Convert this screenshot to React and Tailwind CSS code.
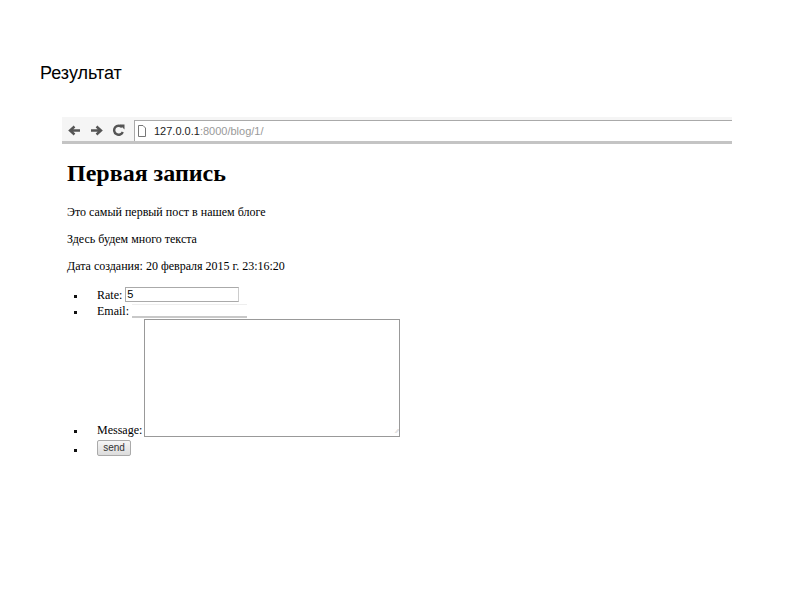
import React from 'react';

const Bullet = () => (
  <span className="w-[24px] flex justify-start pl-[1px] pb-[4px] shrink-0">
    <span className="block w-[3px] h-[3px] bg-[#111]" />
  </span>
);

export default function App() {
  return (
    <div className="w-[794px] h-[595px] bg-white overflow-hidden font-['Liberation_Serif',serif] text-black">
      <div className="pt-[63px] pl-[40px] text-[18px] leading-[21px] font-['Liberation_Sans',Arial,sans-serif]">
        Результат
      </div>

      {/* browser chrome */}
      <div className="mt-[33px] ml-[62px] w-[670px] h-[27px] bg-[#f5f5f5] border-b-[3px] border-[#c4c4c4] flex items-start">
        <div className="flex items-center gap-[9px] pl-[6px] pt-[7px] text-[#555]">
          <svg width="13" height="11" viewBox="0 0 13 11">
            <path d="M12 5.5H3M6.5 1.5L2 5.5l4.5 4" stroke="#555" strokeWidth="2.4" fill="none" />
          </svg>
          <svg width="13" height="11" viewBox="0 0 13 11">
            <path d="M1 5.5h9M6.5 1.5l4.5 4-4.5 4" stroke="#555" strokeWidth="2.4" fill="none" />
          </svg>
          <svg width="13" height="12" viewBox="0 0 13 12">
            <path d="M10 3.2A4.5 4.5 0 1 0 10.8 8" stroke="#555" strokeWidth="2.4" fill="none" />
            <path d="M7.5 0.5h5v5z" fill="#555" />
          </svg>
        </div>
        <div className="ml-[9px] mt-[3px] flex-1 h-[21px] bg-white border-t border-l border-[#aaa] flex items-center pl-[3px]">
          <svg width="8" height="12" viewBox="0 0 8 12" className="mr-[8px]">
            <path d="M0.5 0.5h4.5l2.5 2.5v8.5h-7z" stroke="#777" fill="none" />
          </svg>
          <span className="text-[11px] font-['Liberation_Sans',Arial,sans-serif] text-[#222]">127.0.0.1</span>
          <span className="text-[11px] font-['Liberation_Sans',Arial,sans-serif] text-[#999]">:8000/blog/1/</span>
        </div>
      </div>

      {/* page */}
      <div className="ml-[67px] mt-[15px]">
        <h1 className="text-[24px] leading-[28px] font-bold">Первая запись</h1>
        <p className="mt-[18px] text-[12px] leading-[15px]">Это самый первый пост в нашем блоге</p>
        <p className="mt-[12px] text-[12px] leading-[15px]">Здесь будем много текста</p>
        <p className="mt-[12px] text-[12px] leading-[15px]">Дата создания: 20 февраля 2015 г. 23:16:20</p>

        <ul className="mt-[13px] ml-[6px] text-[12px] leading-[13px]">
          <li className="flex items-end h-[15px]">
            <Bullet />
            <span className="mr-[3px]">Rate:</span>
            <span className="w-[114px] h-[15px] border border-[#aaa] border-r-[#ccc] pl-[1px] text-[11px] leading-[13px] font-['Liberation_Sans',Arial,sans-serif]">5</span>
          </li>
          <li className="flex items-end h-[15px] mt-[1px]">
            <Bullet />
            <span className="mr-[3px]">Email:</span>
            <span className="w-[115px] h-[14px] border-t border-[#eee] border-b-2 border-b-[#c8c8c8]" />
          </li>
          <li className="flex items-end mt-[1px]">
            <Bullet />
            <span className="mr-[2px]">Message:</span>
            <span className="w-[256px] h-[118px] border border-[#999] relative">
              <span className="absolute right-[1px] bottom-[1px] text-[7px] leading-[7px] text-[#999]">⁄⁄</span>
            </span>
          </li>
          <li className="flex items-end mt-[3px]">
            <Bullet />
            <span className="w-[34px] h-[16px] border border-[#aaa] rounded-[2px] bg-gradient-to-b from-[#f6f6f6] to-[#dcdcdc] text-[10px] leading-[14px] text-center text-[#333] font-['Liberation_Sans',Arial,sans-serif]">
              send
            </span>
          </li>
        </ul>
      </div>
    </div>
  );
}
